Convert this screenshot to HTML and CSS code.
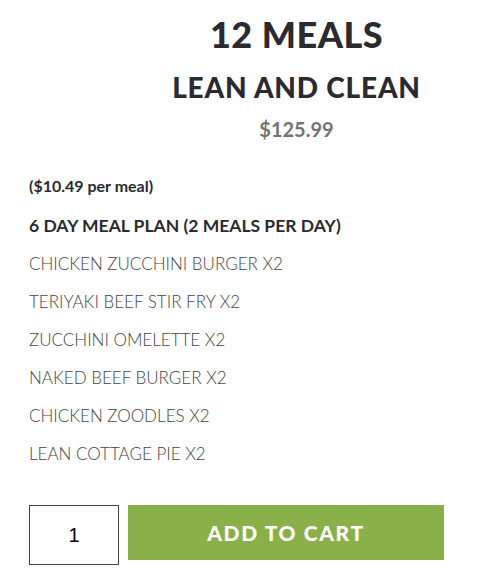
FILE: index.html
```html
<!DOCTYPE html>
<html>
<head>
<meta charset="utf-8">
<link rel="stylesheet" href="styles.css">
</head>
<body>
<div class="product">
  <div class="head">
    <h1 class="title">12 MEALS</h1>
    <h2 class="subtitle">LEAN AND CLEAN</h2>
    <div class="price">$125.99</div>
  </div>
  <div class="desc">
    <p class="per">($10.49 per meal)</p>
    <p class="plan">6 DAY MEAL PLAN (2 MEALS PER DAY)</p>
    <p class="item">CHICKEN ZUCCHINI BURGER X2</p>
    <p class="item">TERIYAKI BEEF STIR FRY X2</p>
    <p class="item">ZUCCHINI OMELETTE X2</p>
    <p class="item">NAKED BEEF BURGER X2</p>
    <p class="item">CHICKEN ZOODLES X2</p>
    <p class="item">LEAN COTTAGE PIE X2</p>
  </div>
  <div class="cart">
    <div class="qty">1</div>
    <button class="add">ADD TO CART</button>
  </div>
</div>
</body>
</html>
```
FILE: styles.css
```css
html, body { margin: 0; padding: 0; background: #fff; }
body { font-family: "Lato", "Noto Sans", sans-serif; color: #2a2a30; }
.product { padding: 0 0 0 29px; }
.head { text-align: center; margin-left: 87px; width: 361px; }
.title { margin: 0; padding-top: 11px; font-size: 36px; line-height: 46px; font-weight: 900; letter-spacing: 0.5px; }
.subtitle { margin: 13px 0 0; font-size: 28px; line-height: 34px; font-weight: 900; letter-spacing: 0.8px; }
.price { margin-top: 13px; font-size: 20px; line-height: 24px; font-weight: 700; color: #737373; }
.desc { margin-top: 35px; }
.desc p { margin: 0; }
.per { font-size: 16px; font-weight: 700; line-height: 20px; }
.plan { margin-top: 19px !important; font-size: 17.5px; font-weight: 700; line-height: 22px; }
.item { margin-top: 16px !important; font-size: 17px; font-weight: 300; line-height: 22px; color: #44444a; }
.cart { display: flex; align-items: flex-start; gap: 9px; margin-top: 40px; }
.qty { box-sizing: border-box; width: 90px; height: 60px; border: 1px solid #444; display: flex; align-items: center; justify-content: center; font-family: "Liberation Sans", Arial, sans-serif; font-size: 20px; color: #000; }
.add { box-sizing: border-box; width: 316px; height: 55px; border: 0; background: #8ab04a; color: #fff; font-family: "Lato", sans-serif; font-weight: 900; font-size: 21px; letter-spacing: 1.6px; padding: 0; }
```
